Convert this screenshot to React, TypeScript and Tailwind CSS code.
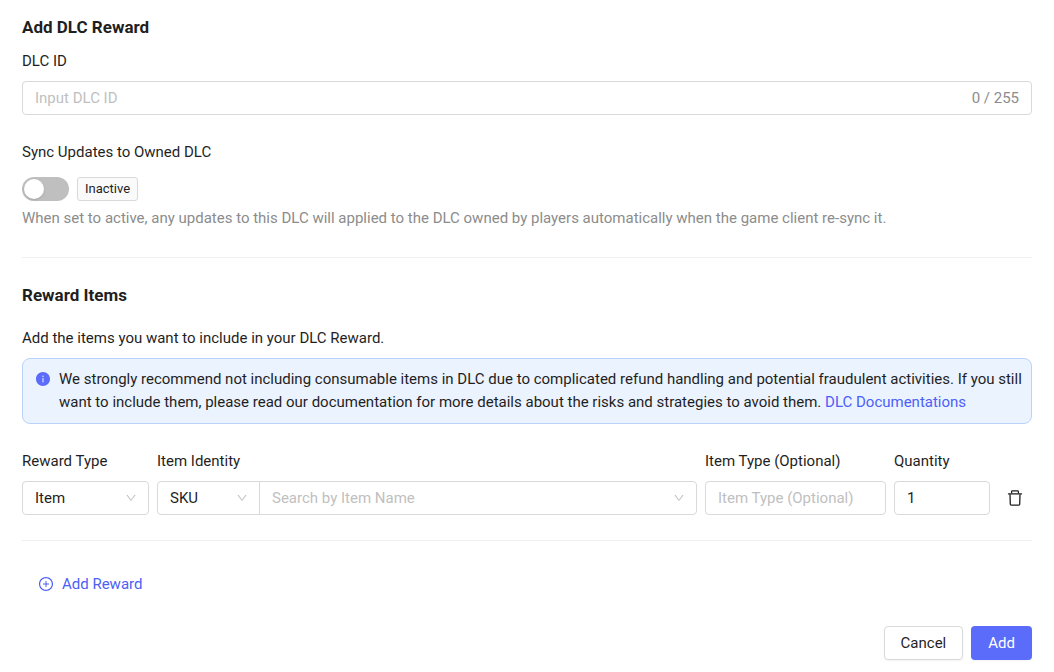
import { useState, type ReactNode, type SelectHTMLAttributes } from 'react'
import { AiFillInfoCircle, AiOutlineDown, AiOutlinePlusCircle } from 'react-icons/ai'
import clsx from 'clsx'

const MAX_ID_LENGTH = 255

const fieldClass =
  'h-[34px] w-full min-w-0 border border-[#d9d9d9] bg-white px-3 outline-none placeholder:text-[#bfbfbf] focus:border-[#5a6cf9]'

function TrashIcon() {
  return (
    <svg className="size-4" viewBox="0 0 16 16" fill="none" stroke="currentColor" aria-hidden="true">
      <path d="M4.6 3.4V1.7a.8.8 0 0 1 .8-.8h5.2a.8.8 0 0 1 .8.8v1.7" strokeWidth="1.2" />
      <path d="M1.5 3.9h13" strokeWidth="1.3" strokeLinecap="round" />
      <path d="M3 4.2l.3 10.1a.8.8 0 0 0 .8.8h7.8a.8.8 0 0 0 .8-.8L13 4.2" strokeWidth="1.3" />
    </svg>
  )
}

function Field({ id, label, children }: { id: string; label: string; children: ReactNode }) {
  return (
    <div className="flex min-w-0 flex-col gap-2">
      <label htmlFor={id} className="leading-6">
        {label}
      </label>
      {children}
    </div>
  )
}

interface SelectProps extends SelectHTMLAttributes<HTMLSelectElement> {
  wrapperClass?: string
}

function Select({ wrapperClass, className, children, ...props }: SelectProps) {
  return (
    <div className={clsx('relative', wrapperClass)}>
      <select className={clsx(fieldClass, 'appearance-none pr-8', className)} {...props}>
        {children}
      </select>
      <AiOutlineDown className="pointer-events-none absolute top-[11px] right-3 size-3 text-[#bfbfbf]" />
    </div>
  )
}

export default function App() {
  const [dlcId, setDlcId] = useState('')
  const [active, setActive] = useState(false)
  const [item, setItem] = useState('')

  return (
    <form
      className="bg-white px-[22px] pt-[15px] pb-3 font-['Roboto',sans-serif] text-[15px] text-[#1f1f1f]"
      onSubmit={(e) => e.preventDefault()}
    >
      <h2 className="mb-[10px] text-[17px] leading-6 font-bold">Add DLC Reward</h2>

      <Field id="dlc-id" label="DLC ID">
        <div className="flex h-[34px] items-center rounded border border-[#d9d9d9] px-3">
          <input
            id="dlc-id"
            className="min-w-0 flex-1 outline-none placeholder:text-[#bfbfbf]"
            placeholder="Input DLC ID"
            maxLength={MAX_ID_LENGTH}
            value={dlcId}
            onChange={(e) => setDlcId(e.target.value)}
          />
          <span className="text-[#8c8c8c]">
            {dlcId.length} / {MAX_ID_LENGTH}
          </span>
        </div>
      </Field>

      {/* Sync switch */}
      <div className="mt-[25px]">
        <label htmlFor="sync" className="block leading-6">
          Sync Updates to Owned DLC
        </label>
        <div className="mt-[13px] flex items-center gap-2">
          <input
            id="sync"
            type="checkbox"
            role="switch"
            checked={active}
            onChange={(e) => setActive(e.target.checked)}
            className="h-6 w-[47px] cursor-pointer appearance-none rounded-full bg-[#bfbfbf] p-[2px] before:block before:size-5 before:rounded-full before:bg-white before:shadow-sm checked:bg-[#5a6cf9] checked:before:ml-[23px]"
          />
          <span className="rounded-[3px] border border-[#d9d9d9] bg-[#fafafa] px-[7px] text-[13px] leading-[22px]">
            {active ? 'Active' : 'Inactive'}
          </span>
        </div>
        <p className="mt-[5px] leading-6 text-[#8c8c8c]">
          When set to active, any updates to this DLC will applied to the DLC owned by players automatically when the
          game client re-sync it.
        </p>
      </div>

      <hr className="mt-[27px] mb-[25px] border-[#f0f0f0]" />

      <h2 className="text-[17px] leading-6 font-bold">Reward Items</h2>
      <p className="mt-[19px] mb-2 leading-6">Add the items you want to include in your DLC Reward.</p>

      <div className="flex gap-2 rounded-lg border border-[#b9d3fb] bg-[#ebf3fe] py-[9px] pr-1 pl-3 leading-[23px]">
        <AiFillInfoCircle className="mt-[3px] size-4 shrink-0 text-[#5a6cf9]" />
        <p>
          We strongly recommend not including consumable items in DLC due to complicated refund handling and potential
          fraudulent activities. If you still want to include them, please read our documentation for more details about
          the risks and strategies to avoid them.{' '}
          <a href="#documentation" className="text-[#4c5ff7]">
            DLC Documentations
          </a>
        </p>
      </div>

      {/* Reward row */}
      <div className="mt-[25px] grid grid-cols-[127px_1fr_181px_96px_34px] items-end gap-2">
        <Field id="reward-type" label="Reward Type">
          <Select id="reward-type" className="rounded">
            <option>Item</option>
          </Select>
        </Field>
        <Field id="item-search" label="Item Identity">
          <div className="flex">
            <Select aria-label="Identity type" wrapperClass="w-[103px]" className="rounded-l">
              <option>SKU</option>
            </Select>
            <Select
              id="item-search"
              wrapperClass="-ml-px min-w-0 flex-1"
              className={clsx('rounded-r', !item && 'text-[#bfbfbf]')}
              value={item}
              onChange={(e) => setItem(e.target.value)}
            >
              <option value="">Search by Item Name</option>
            </Select>
          </div>
        </Field>
        <Field id="item-type" label="Item Type (Optional)">
          <input id="item-type" className={clsx(fieldClass, 'rounded')} placeholder="Item Type (Optional)" />
        </Field>
        <Field id="quantity" label="Quantity">
          <input id="quantity" className={clsx(fieldClass, 'rounded')} inputMode="numeric" defaultValue="1" />
        </Field>
        <button type="button" aria-label="Remove reward" className="flex size-[34px] items-center justify-center">
          <TrashIcon />
        </button>
      </div>

      <hr className="mt-[25px] mb-[26px] border-[#f0f0f0]" />

      <button type="button" className="ml-4 flex h-[34px] items-center gap-2 text-[#4c5ff7]">
        <AiOutlinePlusCircle className="size-4" />
        Add Reward
      </button>

      <div className="mt-[25px] flex justify-end gap-2">
        <button type="button" className="h-[34px] rounded border border-[#d9d9d9] px-4 shadow-xs">
          Cancel
        </button>
        <button type="submit" className="h-[34px] rounded bg-[#5a6cf9] px-[17px] text-white shadow-xs">
          Add
        </button>
      </div>
    </form>
  )
}
